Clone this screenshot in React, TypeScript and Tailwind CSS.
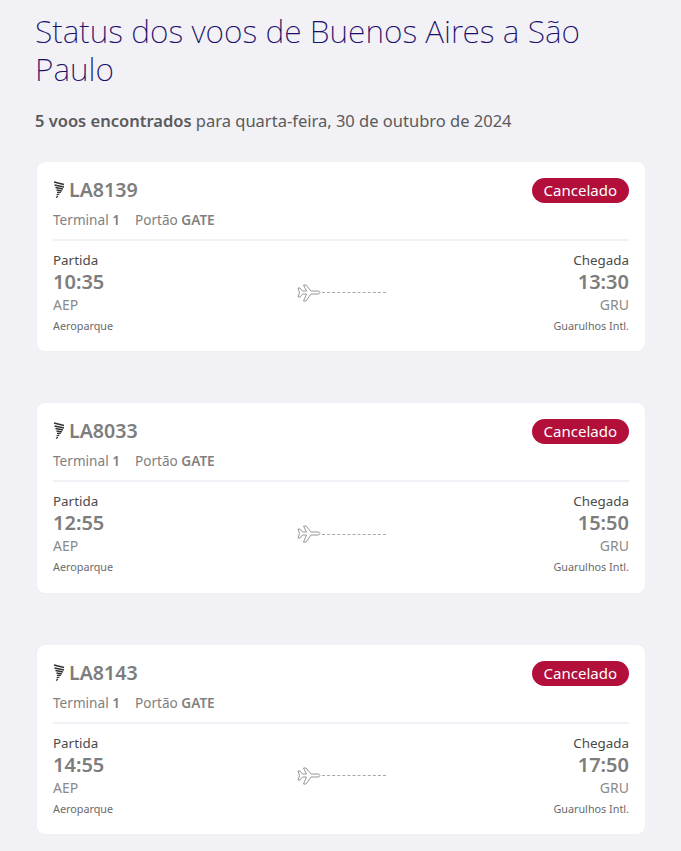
const flights = [
  { number: 'LA8139', dep: '10:35', arr: '13:30' },
  { number: 'LA8033', dep: '12:55', arr: '15:50' },
  { number: 'LA8143', dep: '14:55', arr: '17:50' },
]

function TailLogo() {
  return (
    <svg width="12" height="18" viewBox="0 0 12 18" fill="none" stroke="#303030" strokeWidth="1.3" className="shrink-0">
      <path d="M1 1 L11 3.5" />
      <path d="M1.5 4 L11 6" />
      <path d="M2.5 6.5 L10 8" />
      <path d="M3.5 9 L9 9.8" />
      <path d="M4 11.5 L8 11.2" />
      <path d="M3.5 14 L6.5 13" strokeWidth="1.2" />
      <path d="M3 16.5 L5 15.2" strokeWidth="1.2" />
    </svg>
  )
}

function PlaneLine() {
  return (
    <div className="flex items-center mb-[2px]">
      <svg width="24" height="18" viewBox="0 0 24 18" fill="none" stroke="#8c8c8c" strokeWidth="0.9" strokeLinejoin="round">
        <path d="M1 4 L3 4 L5.5 7 L9.5 7 L6.5 1 L9 1 L14 7 L21 7 Q23 7.6 23 8.5 Q23 9.4 21 10 L14 10 L9 17 L6.5 17 L9.5 10 L5.5 10 L3 13 L1 13 L2.5 8.5 Z" />
      </svg>
      <div className="w-[64px] ml-[1px] border-t border-dashed border-[#a8a8a8]" />
    </div>
  )
}

function FlightCard({ number, dep, arr }: { number: string; dep: string; arr: string }) {
  return (
    <div className="bg-white rounded-lg px-4 pt-[15px] pb-[14.5px] shadow-[0_0_2px_rgba(0,0,0,0.04)]">
      <div className="flex items-start justify-between">
        <div className="flex items-center gap-[4px] h-[26px]">
          <TailLogo />
          <span className="text-[19.6px] font-semibold text-[#7d7d7d] leading-[26px]">{number}</span>
        </div>
        <span className="bg-[#b30f3b] text-white text-[15px] leading-[25px] rounded-full px-3 mt-[1px]">Cancelado</span>
      </div>
      <div className="flex gap-[15px] mt-[8px] text-[13.6px] leading-[18px] text-[#808080]">
        <span>Terminal <b className="font-semibold">1</b></span>
        <span>Portão <b className="font-semibold">GATE</b></span>
      </div>
      <div className="h-[2px] bg-[#f0f0f6] mt-[10px]" />
      <div className="flex items-center mt-[10px]">
        <div className="flex-1">
          <p className="text-[13.4px] leading-[18px] text-[#4a4a4a]">Partida</p>
          <p className="text-[20px] leading-[26px] font-semibold text-[#7d7d7d]">{dep}</p>
          <p className="text-[14px] leading-[20px] text-[#8a8a8a]">AEP</p>
          <p className="text-[10.8px] leading-[22px] text-[#6a6a6a]">Aeroparque</p>
        </div>
        <PlaneLine />
        <div className="flex-1 text-right">
          <p className="text-[13.4px] leading-[18px] text-[#4a4a4a]">Chegada</p>
          <p className="text-[20px] leading-[26px] font-semibold text-[#7d7d7d]">{arr}</p>
          <p className="text-[14px] leading-[20px] text-[#8a8a8a]">GRU</p>
          <p className="text-[10.8px] leading-[22px] text-[#6a6a6a]">Guarulhos Intl.</p>
        </div>
      </div>
    </div>
  )
}

export default function App() {
  return (
    <div className="h-[851px] overflow-hidden bg-[#f1f1f6] pl-[35px] pr-[36px] pt-[12px] font-['Noto_Sans',sans-serif]">
      <h1 className="text-[31.8px] leading-[38px] font-extralight text-[#1b0f6b]">
        Status dos voos de Buenos Aires a São Paulo
      </h1>
      <p className="mt-[21px] text-[16.5px] leading-[24px] text-[#5a5a5a]">
        <b className="font-semibold">5 voos encontrados</b> para quarta-feira, 30 de outubro de 2024
      </p>
      <div className="flex flex-col gap-[52px] mt-[28.9px] ml-[2px]">
        {flights.map(f => (
          <FlightCard key={f.number} {...f} />
        ))}
      </div>
    </div>
  )
}
